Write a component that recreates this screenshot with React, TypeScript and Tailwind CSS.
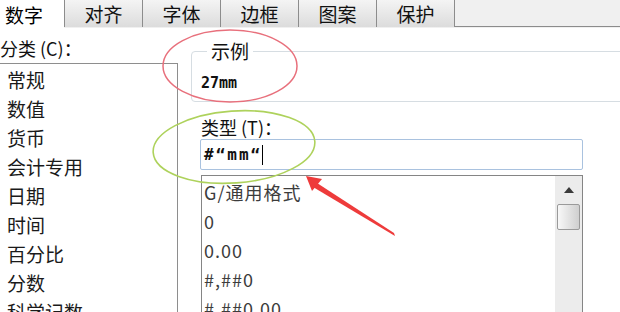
import React from 'react';

const TABS = ['对齐', '字体', '边框', '图案', '保护'];
const CATEGORIES = ['常规', '数值', '货币', '会计专用', '日期', '时间', '百分比', '分数', '科学记数'];
const FORMATS = ['G/通用格式', '0', '0.00', '#,##0', '#,##0.00'];

function Tabs() {
  return (
    <div className="flex h-[28px] shrink-0 bg-[#f0f0f0]">
      <div className="w-[64px] h-[28px] bg-white flex items-center pl-[5px] text-[19px] leading-none text-black">
        数字
      </div>
      {TABS.map(tab => (
        <div
          key={tab}
          className="w-[79px] h-[27px] border-l border-r border-[#8c8c8c] -mr-px bg-gradient-to-b from-[#f4f4f4] to-[#dcdcdc] flex items-center justify-center text-[19px] leading-none text-[#111]"
        >
          {tab}
        </div>
      ))}
      <div className="flex-1 h-[27px] border-b border-[#8c8c8c] ml-px" />
    </div>
  );
}

function CategoryList() {
  return (
    <div className="w-[178px] shrink-0 flex flex-col">
      <div className="h-[35px] shrink-0 pt-[8px] text-[18px] leading-[24px] text-[#111] whitespace-nowrap">
        分类 (C)：
      </div>
      <div className="flex-1 min-h-0 overflow-hidden border-t border-r border-[#8e8e8e] pt-[2px] pl-[7px]">
        {CATEGORIES.map(c => (
          <div key={c} className="h-[29px] flex items-center text-[19px] text-[#1a1a1a] whitespace-nowrap">
            {c}
          </div>
        ))}
      </div>
    </div>
  );
}

function ScrollBar() {
  return (
    <div className="w-[27px] shrink-0 bg-[#ececec] flex flex-col items-center pt-[11px]">
      <svg width="10" height="6" viewBox="0 0 10 6">
        <polygon points="5,0 10,6 0,6" fill="#3a3a3a" />
      </svg>
      <div className="mt-[11px] w-[23px] h-[26px] rounded-[2px] border border-[#9a9a9a] bg-gradient-to-r from-[#f8f8f8] to-[#cfcfcf]" />
    </div>
  );
}

function FormatPanel() {
  return (
    <div className="flex-1 min-h-0 flex flex-col pl-[13px]">
      <fieldset className="shrink-0 h-[61px] mt-[13px] -mr-[10px] border border-[#d6dde2] rounded-[4px] pl-[9px] pr-0 pb-0">
        <legend className="ml-[6px] px-[4px] text-[19px] leading-[20px] text-[#111]">示例</legend>
        <div className="mt-[15px] text-[15px] font-bold leading-none text-[#111] font-['DejaVu_Sans_Mono',monospace]">27mm</div>
      </fieldset>
      <div className="shrink-0 ml-[10px] mt-[14px] text-[18px] leading-[22px] text-[#111] whitespace-nowrap">类型 (T)：</div>
      <div className="shrink-0 ml-[9px] mt-[1px] w-[383px] h-[31px] border border-[#a9c2df] rounded-[2px] flex items-center pl-[3px] text-[16px] font-bold tracking-[2px] text-[#111] font-['DejaVu_Sans_Mono',monospace]">
        #“mm“<span className="w-px h-[20px] bg-black" />
      </div>
      <div className="ml-[10px] mt-[5px] w-[382px] flex-1 min-h-0 overflow-hidden border-t border-l border-r border-[#858585] flex">
        <div className="flex-1 pt-[2px] pl-[2px]">
          {FORMATS.map(f => (
            <div key={f} className="h-[29px] flex items-center text-[18px] tracking-[1px] text-[#3c3c3c] whitespace-nowrap">
              {f}
            </div>
          ))}
        </div>
        <ScrollBar />
      </div>
    </div>
  );
}

export default function App() {
  return (
    <div className="relative w-[620px] h-[312px] overflow-hidden bg-white font-['Noto_Sans_CJK_SC','Noto_Sans',sans-serif] flex flex-col">
      <Tabs />
      <div className="flex flex-1 min-h-0">
        <CategoryList />
        <FormatPanel />
      </div>

      <svg className="absolute inset-0 pointer-events-none" width="620" height="312" viewBox="0 0 620 312">
        <ellipse cx="230" cy="66" rx="67" ry="36" fill="none" stroke="#e8707c" strokeWidth="1.5" />
        <ellipse cx="234" cy="147" rx="81" ry="36" fill="none" stroke="#aed25c" strokeWidth="1.6" transform="rotate(-4 234 147)" />
        <polygon points="395,236 394,233 317,183 313,187" fill="#ee3b3b" />
        <polygon points="306,176 322,179 312,191" fill="#ee3b3b" />
      </svg>
    </div>
  );
}
